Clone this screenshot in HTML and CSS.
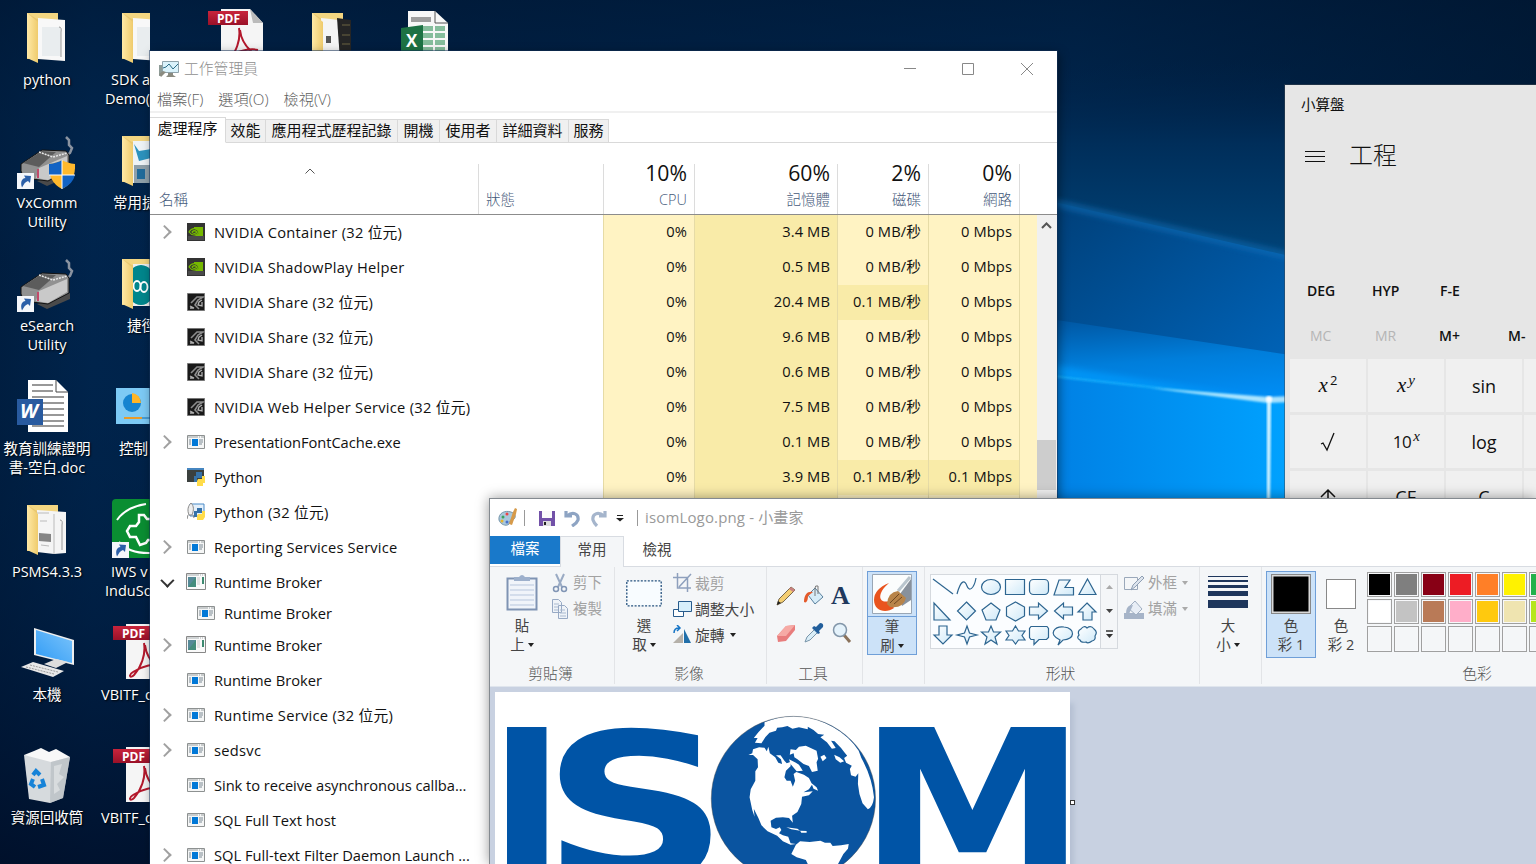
FILE: index.html
```html
<!DOCTYPE html>
<html lang="zh-Hant">
<head>
<meta charset="utf-8">
<title>Desktop</title>
<link rel="stylesheet" href="styles.css">
</head>
<body>
<svg width="0" height="0" class="defs">
<defs>
<linearGradient id="gFold" x1="0" x2="1"><stop offset="0" stop-color="#ffe9a6"/><stop offset="1" stop-color="#efcb6c"/></linearGradient>
<linearGradient id="gRed" x1="0" x2="0" y1="0" y2="1"><stop offset="0" stop-color="#c8243c"/><stop offset="1" stop-color="#9a1128"/></linearGradient>
<linearGradient id="gScr" x1="0" y1="1" x2="1" y2="0"><stop offset="0" stop-color="#2f9bf5"/><stop offset="1" stop-color="#7cc4fb"/></linearGradient>
<linearGradient id="gShape" x1="0" y1="0" x2="1" y2="1"><stop offset="0" stop-color="#fff"/><stop offset="1" stop-color="#cfe9f8"/></linearGradient>
<symbol id="folder" viewBox="0 0 48 54"><path d="M5 2h31v46H5z" fill="#e9c76f"/><path d="M5 2h31v6H15z" fill="#f3d681"/></symbol>
<symbol id="flap" viewBox="0 0 48 54"><path d="M5 2l11 9v41L5 47z" fill="url(#gFold)"/></symbol>
<symbol id="pdf" viewBox="0 0 56 56"><path d="M14 1h29l13 14v41H14z" fill="#f5f5f5"/><path d="M43 1l13 14H46z" fill="#bbb"/><path d="M32 20c2 12-3 24-10 32-4 4-6 0-1-3 9-6 22-9 30-7M33 22c1 10 6 17 13 23" fill="none" stroke="#b3182c" stroke-width="2"/><rect x="1" y="3" width="40" height="14" fill="url(#gRed)"/></symbol>
<symbol id="short" viewBox="0 0 17 17"><path d="M0 0h17v17H0z" fill="#f4f6fa"/><path d="M5 14.500c-2-6 0-9 3.500-9.500L7 2.500l7 .5-1 7-2-2c-3 1-4 3-6 6.500z" fill="#2b5fa8"/></symbol>
<symbol id="mouse" viewBox="0 0 60 54"><path d="M51 2l3 3v5l3 3-2 5-5 3" fill="none" stroke="#8a93a0" stroke-width="2.500"/><path d="M22 46l10 5 23-10v-6z" fill="#4a4a4a"/><path d="M6 29L27 15l24 1 3 4v15L33 46 9 43 6 36z" fill="#919191" stroke="#111"/><path d="M8 28l19-12 14 1-17 15z" fill="#5c5c5c"/><path d="M24 33L52 21v13L33 45l-12-2z" fill="#c9c9c9"/><path d="M24 17l14 5 14-4" fill="none" stroke="#e8e8e8" stroke-width="1.500" stroke-dasharray="2 1"/><path d="M23 34v9" stroke="#c2496a" stroke-width="2"/></symbol>
<symbol id="nvg" viewBox="0 0 18 18"><path d="M0 0h18v18H0z" fill="#333"/><path d="M1 13h16v4H1z" fill="#4a4a4a"/><path d="M7 4h9v9H7c3-1 5-3 5-4-2-3-4-3-5-3z" fill="#76b900"/><path d="M2 9c3-5 8-4 10 0-3 4-7 4-10 0zM5 9c2-2 4-1 5 0-2 2-4 2-5 0z" fill="none" stroke="#76b900" stroke-width="1.200"/></symbol>
<symbol id="nvs" viewBox="0 0 18 18"><path d="M.5.500h17v17H.5z" fill="#191919" stroke="#777"/><path d="M4 10l6-6h6l-5 3-3 5 4 4" fill="none" stroke="#8d8d8d" stroke-width="1.600"/><path d="M15 7l-3 2-1 3 4 1V9M3 13l4 2H3" fill="none" stroke="#b0b0b0" stroke-width="1.300"/></symbol>
<symbol id="app" viewBox="0 0 18 14"><path d="M.5.500h17v13H.5z" fill="#f5f6f6" stroke="#8d9191"/><path d="M1 2h16" stroke="#9ca2a4" stroke-dasharray="10 1 1 1"/><path d="M5 4h6v7H5z" fill="#0078d7"/><path d="M2 5h2M2 7h2M2 9h2M12 5h4M12 7h4M12 9h3" stroke="#7d8a94"/></symbol>
<symbol id="appg" viewBox="0 0 20 17"><path d="M.5.500h19v16H.5z" fill="#fafafa" stroke="#888"/><path d="M1 2h18" stroke="#a6aeb0" stroke-dasharray="12 1 1 1 1 1"/><path d="M2 4h8v10H2z" fill="#448c7c"/><path d="M2 4h8L2 14z" fill="#568a98"/><path d="M11 5h3M11 7h3M11 9h3M11 11h3" stroke="#ccc"/><path d="M16 4h2v7h-2z" fill="#3d8a70"/></symbol>
<symbol id="py" viewBox="0 0 18 18"><path d="M0 0h17v14H0z" fill="#3b403e"/><path d="M0 0h17v2H0z" fill="#4686c0"/><path d="M9 4h6v6h-5v4H7V8h2z" fill="#3672a8"/><path d="M11 11h4V8h3v7h-2v3h-6v-5z" fill="#ffdc4a"/></symbol>
<symbol id="py3" viewBox="0 0 18 18"><path d="M3 1h14v12H3z" fill="#e4f0fb" stroke="#4b8bc8"/><path d="M4 0c3 3 3 7 1 12H2C0 7 1 3 4 0zM1 12l-1 4M6 12l1 3" fill="#eee" stroke="#888"/><path d="M10 5h5v5h-5v4H7V8h3z" fill="#3672a8"/><path d="M11 11h4V8h3v6l-2 3h-6v-4z" fill="#ffdc4a"/></symbol>
</defs>
</svg>

<svg class="wallpaper" viewBox="0 0 1536 864" preserveAspectRatio="none">
<defs>
<linearGradient id="wBase" x1="0" x2="1"><stop offset="0" stop-color="#001a3a"/><stop offset=".06" stop-color="#002249"/><stop offset=".3" stop-color="#001c3e"/><stop offset=".7" stop-color="#00244b"/><stop offset="1" stop-color="#00142c"/></linearGradient>
<linearGradient id="wDown" x1="0" x2="0" y1="0" y2="1"><stop offset="0" stop-color="#001a38" stop-opacity=".6"/><stop offset=".3" stop-color="#00305e" stop-opacity=".15"/><stop offset="1" stop-color="#000d26" stop-opacity=".75"/></linearGradient>
<linearGradient id="wSky" x1="0" x2="0" y1="0" y2="1"><stop offset="0" stop-color="#002248" stop-opacity="0"/><stop offset=".4" stop-color="#002e5a"/><stop offset="1" stop-color="#00467c"/></linearGradient>
<linearGradient id="wMid" x1="0" x2="1" y1="0" y2="1"><stop offset="0" stop-color="#003f78"/><stop offset="1" stop-color="#0065bb"/></linearGradient>
<linearGradient id="wLow" x1="0" x2=".2" y1="0" y2="1"><stop offset="0" stop-color="#0055a0"/><stop offset=".5" stop-color="#007edb"/><stop offset="1" stop-color="#008ff8"/></linearGradient>
<linearGradient id="wWin" x1="0" x2="1"><stop offset="0" stop-color="#0080e4"/><stop offset="1" stop-color="#00a2ff"/></linearGradient>
<filter id="b1"><feGaussianBlur stdDeviation="1"/></filter><filter id="b4"><feGaussianBlur stdDeviation="3"/></filter>
</defs>
<path d="M0 0h1536v864H0z" fill="url(#wBase)"/><path d="M0 0h1536v864H0z" fill="url(#wDown)"/>
<path d="M1050 60h240v210h-240z" fill="url(#wSky)"/>
<path d="M1050 201L1290 256v120h-240z" fill="url(#wMid)"/>
<path d="M1050 202L1290 256" stroke="#1678c5" stroke-width="6" opacity=".6" filter="url(#b4)"/>
<path d="M1050 319L1290 355v60h-240z" fill="url(#wLow)"/>
<path d="M1050 365L1268 399l-218-21z" fill="#009cff" opacity=".7" filter="url(#b4)"/>
<path d="M1050 376L1268 401h22v100h-240z" fill="url(#wWin)"/>
<path d="M1050 376L1268 400" stroke="#1cb7ff" stroke-width="2" opacity=".8" filter="url(#b1)"/>
<path d="M1150 388l120 9 20-1v6l-22 1z" fill="#c7f0ff" opacity=".85" filter="url(#b1)"/>
<path d="M1267 399h4l-1 100h-3z" fill="#d9f5ff" filter="url(#b1)"/>
<circle cx="1269" cy="399" r="3" fill="#fff" filter="url(#b1)"/>
</svg>

<main class="desktop">
<section class="col first">
 <div class="item"><svg class="ic" viewBox="0 0 94 66"><use href="#folder" x="22" y="11" width="48" height="54"/><path d="M38 18l27 2v41l-27-2z" fill="#f8f8f8"/><path d="M42 27h19v29H42z" fill="#e9edef"/><path d="M59 27q3 0 2 5v25" fill="none" stroke="#999"/><use href="#flap" x="22" y="11" width="48" height="54"/></svg><p>python</p></div>
 <div class="item"><svg class="ic" viewBox="0 0 94 66"><use href="#mouse" x="15" y="12" width="60" height="54"/><path d="M49 41q8-1 13-4 5 3 13 4 1 18-13 25-14-7-13-25z" fill="#ffb92d"/><path d="M49 41q8-1 13-4v15H49zM62 52h13q-2 9-13 14z" fill="#1263c4"/><path d="M62 37v29M49 52h26" stroke="#fff" stroke-width="1"/><use href="#short" x="17" y="50" width="17" height="17"/></svg><p>VxComm<br>Utility</p></div>
 <div class="item"><svg class="ic" viewBox="0 0 94 66"><use href="#mouse" x="15" y="12" width="60" height="54"/><use href="#short" x="17" y="50" width="17" height="17"/></svg><p>eSearch<br>Utility</p></div>
 <div class="item"><svg class="ic" viewBox="0 0 94 66"><path d="M28 11h28l12 12v40H28z" fill="#fff"/><path d="M56 11v12h12" fill="none" stroke="#444"/><path d="M32 16h21M32 22h21M32 28h32M43 34h21M43 40h21M43 46h21M43 52h21M32 57h32" stroke="#777" stroke-width="1.500"/><path d="M17 30h26v26H17z" fill="#285a9f"/><text x="20" y="49" class="word-text">W</text></svg><p>教育訓練證明<br>書-空白.doc</p></div>
 <div class="item"><svg class="ic" viewBox="0 0 94 66"><use href="#folder" x="22" y="11" width="48" height="54"/><path d="M37 18l29 2v41l-12 1-17-2z" fill="#f5f5f5"/><path d="M54 22v40M37 21h12M40 29h7M41 53l8 1" stroke="#bbb"/><path d="M39 41l12 1v8l-12-1z" fill="#555" opacity=".7"/><path d="M60 28q3 0 2 5v25" fill="none" stroke="#999"/><use href="#flap" x="22" y="11" width="48" height="54"/></svg><p>PSMS4.3.3</p></div>
 <div class="item"><svg class="ic" viewBox="0 0 94 66"><path d="M34 13l40 12v25L34 40z" fill="#eee"/><path d="M36 15l36 11v22l-36-9z" fill="url(#gScr)"/><path d="M44 49l12-5 12 3-12 6z" fill="#ddd"/><path d="M21 52l12-5 31 9-11 6z" fill="#e8e8e8"/><path d="M26 52l28 7M30 50l28 7" stroke="#999" stroke-dasharray="2 1"/></svg><p>本機</p></div>
 <div class="item"><svg class="ic" viewBox="0 0 94 66"><path d="M24 17l46 2-7 41-13 5-21-4z" fill="#e2e5e7" opacity=".95"/><path d="M24 17l10-4 7-3 8 4 7-3 14 8-19 5z" fill="#f8f8f8"/><path d="M51 24l-1 41 13-5 7-41z" fill="#b7bec2" opacity=".7"/><path d="M54 28l8-2-3 10 5 3-7 7 3 6-6 4" fill="#d8dcde"/><path d="M33 37l3-4 4 4M42 41l2 6-6 2M35 49l-4-3 2-5" fill="none" stroke="#1683d8" stroke-width="4"/></svg><p>資源回收筒</p></div>
</section>
<section class="col second">
 <div class="item"><svg class="ic" viewBox="0 0 94 66"><use href="#folder" x="23" y="11" width="48" height="54"/><path d="M39 18l27 2v41l-27-2z" fill="#f8f8f8"/><path d="M43 27h19v29H43z" fill="#e9edef"/><path d="M60 27q3 0 2 5v25" fill="none" stroke="#999"/><use href="#flap" x="23" y="11" width="48" height="54"/></svg><p class="s1">SDK a<br>Demo(</p></div>
 <div class="item"><svg class="ic" viewBox="0 0 94 66"><use href="#folder" x="23" y="11" width="48" height="54"/><path d="M39 18h27v42H39z" fill="#eef3f6"/><path d="M40 21l5 7 12-2v9l-12 3z" fill="#2c92bd"/><path d="M40 42h16v18H40z" fill="#8fa0aa"/><path d="M43 46h8v10h-8z" fill="#206b9b"/><use href="#flap" x="23" y="11" width="48" height="54"/></svg><p class="s2">常用捷</p></div>
 <div class="item"><svg class="ic" viewBox="0 0 94 66"><use href="#folder" x="23" y="11" width="48" height="54"/><path d="M39 18h27v42H39z" fill="#eee"/><ellipse cx="47" cy="39" rx="15" ry="20" fill="#00868c"/><ellipse cx="43" cy="40" rx="3.500" ry="5" fill="none" stroke="#fff" stroke-width="1.800"/><ellipse cx="50" cy="41" rx="3.500" ry="5" fill="none" stroke="#fff" stroke-width="1.800"/><use href="#flap" x="23" y="11" width="48" height="54"/></svg><p class="s3">捷徑</p></div>
 <div class="item"><svg class="ic" viewBox="0 0 94 66"><path d="M22 19h50v36H22z" fill="#7dcaf5"/><circle cx="38" cy="34" r="9" fill="#1684d0"/><path d="M38 34V24a10 10 0 0 1 9 10z" fill="#ffb526"/><path d="M30 49h18" stroke="#e89b2a" stroke-width="2"/><path d="M48 49h20" stroke="#176fae"/></svg><p class="s4">控制</p></div>
 <div class="item"><svg class="ic" viewBox="0 0 94 66"><rect x="18" y="7" width="62" height="60" rx="4" fill="#0a8e32"/><path d="M23 28q9-13 29-16M25 50q10 12 33 11" fill="none" stroke="#fff" stroke-width="2"/><path d="M60 27h-7l-3-4h-5v7l-3 4h-6l-3 5 3 6h6l4 8 6-2 2-3h6" fill="none" stroke="#fff" stroke-width="2.500"/><use href="#short" x="18" y="50" width="17" height="17"/></svg><p class="s1">IWS v<br>InduSo</p></div>
 <div class="item"><svg class="ic" viewBox="0 0 94 66"><use href="#pdf" x="18" y="8" width="56" height="56"/><text x="28" y="22.500" class="pdf-text">PDF</text></svg><p class="s5">VBITF_d</p></div>
 <div class="item"><svg class="ic" viewBox="0 0 94 66"><use href="#pdf" x="18" y="8" width="56" height="56"/><text x="28" y="22.500" class="pdf-text">PDF</text></svg><p class="s5">VBITF_d</p></div>
</section>
<section class="top-icons">
 <svg viewBox="0 0 94 51"><use href="#pdf" x="17" y="8" width="56" height="56"/><text x="27" y="22.500" class="pdf-text">PDF</text></svg>
 <svg viewBox="0 0 94 51"><use href="#folder" x="23" y="11" width="48" height="54"/><path d="M37 18l19 2v40H37z" fill="#f5f5f5"/><path d="M53 18l14 2v40H56z" fill="#252525"/><path d="M58 25h8M58 35h8M58 44h8" stroke="#6d6542"/><path d="M42 36h5v7h-5z" fill="#555"/><use href="#flap" x="23" y="11" width="48" height="54"/></svg>
 <svg viewBox="0 0 94 51"><path d="M30 11h27l13 12v40H30z" fill="#f7f7f7"/><path d="M57 11v12h13" fill="none" stroke="#555"/><path d="M33 17h20v5H33z" fill="#777" opacity=".7"/><path d="M45 26h10v5H45zM57 26h10v5H57zM45 33h10v5H45zM57 33h10v5H57zM45 40h10v5H45zM57 40h10v5H57zM45 47h10v5H45zM57 47h10v5H57z" fill="#85bd9c"/><path d="M23 28l22-3v30l-22-3z" fill="#1d7244"/><text x="28" y="47" class="xl-text">X</text></svg>
</section>
</main>

<section class="tm">
 <header class="tm-title"><svg width="20" height="18" viewBox="0 0 20 18"><path d="M0 5h3v11H0z" fill="#8e9c98"/><path d="M3.500 1.500h16v11h-16z" fill="#d9f2fb" stroke="#8ea3ac"/><path d="M4 8l3-1 3-3 4 5 5-5" fill="none" stroke="#2b6d87"/><path d="M0 14l4-3 3 1-5 5zM9 13h5v2l3 2H7l2-2z" fill="#8b8b80"/></svg><span>工作管理員</span>
  <div class="ctl"><svg width="18" height="18" viewBox="0 0 18 18"><path d="M4 8.500h12"/></svg><svg width="18" height="18" viewBox="0 0 18 18"><path d="M3.500 3.500h11v11h-11z"/></svg><svg width="18" height="18" viewBox="0 0 18 18"><path d="M3 3l12 12M15 3L3 15"/></svg></div></header>
 <nav class="tm-menu"><span>檔案(F)</span><span>選項(O)</span><span>檢視(V)</span></nav>
 <nav class="tm-tabs"><b class="on t1">處理程序</b><b class="t2">效能</b><b class="t3">應用程式歷程記錄</b><b class="t4">開機</b><b class="t5">使用者</b><b class="t6">詳細資料</b><b class="t7">服務</b></nav>
 <div class="tm-head">
  <div class="h-name"><svg width="10" height="6" viewBox="0 0 10 6"><path d="M.5 5.500L5 1l4.500 4.500" fill="none" stroke="#555"/></svg><span>名稱</span></div><div class="h-st"><span>狀態</span></div>
  <div><em>10%</em><span>CPU</span></div><div><em>60%</em><span>記憶體</span></div><div><em>2%</em><span>磁碟</span></div><div><em>0%</em><span>網路</span></div><div class="end"></div>
 </div>
 <div class="tm-body"><div class="rows">
  <div class="row"><div class="nm"><i class="ch"></i><svg class="p18"><use href="#nvg"/></svg><span class="wd">NVIDIA Container (32 位元)</span></div><u>0%</u><u class="m">3.4 MB</u><u>0 MB/秒</u><u>0 Mbps</u><u></u></div>
  <div class="row"><div class="nm"><i></i><svg class="p18"><use href="#nvg"/></svg><span class="wd">NVIDIA ShadowPlay Helper</span></div><u>0%</u><u class="m">0.5 MB</u><u>0 MB/秒</u><u>0 Mbps</u><u></u></div>
  <div class="row"><div class="nm"><i></i><svg class="p18"><use href="#nvs"/></svg><span class="wd">NVIDIA Share (32 位元)</span></div><u>0%</u><u class="m">20.4 MB</u><u class="m">0.1 MB/秒</u><u>0 Mbps</u><u></u></div>
  <div class="row"><div class="nm"><i></i><svg class="p18"><use href="#nvs"/></svg><span class="wd">NVIDIA Share (32 位元)</span></div><u>0%</u><u class="m">9.6 MB</u><u>0 MB/秒</u><u>0 Mbps</u><u></u></div>
  <div class="row"><div class="nm"><i></i><svg class="p18"><use href="#nvs"/></svg><span class="wd">NVIDIA Share (32 位元)</span></div><u>0%</u><u class="m">0.6 MB</u><u>0 MB/秒</u><u>0 Mbps</u><u></u></div>
  <div class="row"><div class="nm"><i></i><svg class="p18"><use href="#nvs"/></svg><span class="wd">NVIDIA Web Helper Service (32 位元)</span></div><u>0%</u><u class="m">7.5 MB</u><u>0 MB/秒</u><u>0 Mbps</u><u></u></div>
  <div class="row"><div class="nm"><i class="ch"></i><svg class="p14"><use href="#app"/></svg><span class="nr">PresentationFontCache.exe</span></div><u>0%</u><u class="m">0.1 MB</u><u>0 MB/秒</u><u>0 Mbps</u><u></u></div>
  <div class="row"><div class="nm"><i></i><svg class="p18"><use href="#py"/></svg><span>Python</span></div><u>0%</u><u class="m">3.9 MB</u><u class="m">0.1 MB/秒</u><u class="m">0.1 Mbps</u><u></u></div>
  <div class="row"><div class="nm"><i></i><svg class="p18"><use href="#py3"/></svg><span class="wd">Python (32 位元)</span></div><u></u><u class="m"></u><u></u><u></u><u></u></div>
  <div class="row"><div class="nm"><i class="ch"></i><svg class="p14"><use href="#app"/></svg><span class="md">Reporting Services Service</span></div></div>
  <div class="row"><div class="nm"><i class="ch open"></i><svg class="p17"><use href="#appg"/></svg><span>Runtime Broker</span></div></div>
  <div class="row child"><div class="nm"><i></i><svg class="p14"><use href="#app"/></svg><span>Runtime Broker</span></div></div>
  <div class="row"><div class="nm"><i class="ch"></i><svg class="p17"><use href="#appg"/></svg><span>Runtime Broker</span></div></div>
  <div class="row"><div class="nm"><i></i><svg class="p14"><use href="#app"/></svg><span>Runtime Broker</span></div></div>
  <div class="row"><div class="nm"><i class="ch"></i><svg class="p14"><use href="#app"/></svg><span class="wd">Runtime Service (32 位元)</span></div></div>
  <div class="row"><div class="nm"><i class="ch"></i><svg class="p14"><use href="#app"/></svg><span class="wd">sedsvc</span></div></div>
  <div class="row"><div class="nm"><i></i><svg class="p14"><use href="#app"/></svg><span class="nr">Sink to receive asynchronous callba...</span></div></div>
  <div class="row"><div class="nm"><i></i><svg class="p14"><use href="#app"/></svg><span>SQL Full Text host</span></div></div>
  <div class="row"><div class="nm"><i class="ch"></i><svg class="p14"><use href="#app"/></svg><span>SQL Full-text Filter Daemon Launch ...</span></div></div>
 </div><div class="scroll"><svg width="20" height="20" viewBox="0 0 20 20"><path d="M5 13l4.500-4.500L14 13" fill="none" stroke="#555" stroke-width="2"/></svg><div class="thumb"></div></div></div>
</section>

<section class="calc">
 <div class="c-title">小算盤</div>
 <div class="c-mode"><svg width="20" height="14" viewBox="0 0 20 14"><path d="M0 1.500h20M0 6.500h20M0 11.500h20" stroke="#111"/></svg><span>工程</span></div>
 <div class="c-row a"><span>DEG</span><span>HYP</span><span>F-E</span></div>
 <div class="c-row b"><span class="off">MC</span><span class="off">MR</span><span>M+</span><span>M-</span></div>
 <div class="c-grid"><div><span><i>x</i><sup>2</sup></span></div><div><span><i>x</i><sup><i>y</i></sup></span></div><div>sin</div><div></div>
 <div><svg width="16" height="20" viewBox="0 0 16 20"><path d="M1 12l2-1 4 7L14 1" fill="none" stroke="#111" stroke-width="1.300"/></svg></div><div><span class="ten">10<sup><i>x</i></sup></span></div><div>log</div><div></div>
 <div class="r3"><svg width="16" height="18" viewBox="0 0 16 18"><path d="M8 18V2M1 9l7-7 7 7" fill="none" stroke="#111" stroke-width="1.500"/></svg></div><div class="r3">CE</div><div class="r3">C</div><div></div></div>
</section>

<section class="paint">
 <header class="p-title">
  <svg width="20" height="20" viewBox="0 0 20 20"><path d="M1 12C0 5 7 2 13 4c6 2 5 7 1 8-3 0-2 2-3 4-3 3-9 0-10-4z" fill="#a9c8dc" stroke="#7595aa"/><circle cx="5" cy="9" r="1.500" fill="#3aa35a"/><circle cx="9" cy="6" r="1.500" fill="#e44"/><circle cx="4" cy="13" r="1.500" fill="#e7b42c"/><circle cx="9" cy="14" r="1.500" fill="#4772cc"/><path d="M11 16l4-12 2-4 2 1-1 5-4 11z" fill="#d69a4a"/></svg>
  <s></s>
  <svg class="sv" width="16" height="16" viewBox="0 0 16 16"><path d="M0 1h16v15H0z" fill="#7251a8"/><path d="M3 1h10v7H3z" fill="#fafafa"/><path d="M4 11h8v5H4z" fill="#ddd"/><path d="M5 12h2v3H5z" fill="#222"/></svg>
  <svg class="un" width="17" height="18" viewBox="0 0 17 18"><path d="M2 2v5h6M3 7c6-5 12-2 11 4-1 3-3 4-6 6" fill="none" stroke="#8ea4c3" stroke-width="3.200"/></svg>
  <svg class="re" width="17" height="18" viewBox="0 0 17 18"><path d="M15 2v5H9M14 7C8 2 2 5 3 11c1 3 2 4 4 6" fill="none" stroke="#a5b5cc" stroke-width="3.200"/></svg>
  <svg class="dd" width="8" height="8" viewBox="0 0 8 8"><path d="M1 1.500h6" stroke="#222"/><path d="M0 4h8L4 7.500z" fill="#222"/></svg>
  <s class="s2nd"></s><span>isomLogo.png - 小畫家</span>
 </header>
 <nav class="p-tabs"><b class="file">檔案</b><b class="home">常用</b><b class="view">檢視</b></nav>
 <div class="ribbon">
  <div class="grp g1"><div class="body">
   <div class="big"><svg width="32" height="38" viewBox="0 0 32 38"><path d="M1.500 4.500h29v31h-29z" fill="#f0f4fa" stroke="#7f93b3" stroke-width="2"/><path d="M4 11h24M4 16h24M4 21h24M4 26h24M4 31h24" stroke="#b7c6dd"/><path d="M8 3h5q3-4 6 0h5v4H8z" fill="#9db0cc"/></svg><p>貼<br>上<small></small></p></div>
   <ul><li class="off"><svg width="16" height="20" viewBox="0 0 16 20"><path d="M4 1l6 13M12 1L6 14" stroke="#9aabc4" stroke-width="2"/><circle cx="4" cy="16" r="2.500" fill="none" stroke="#8195b5" stroke-width="1.500"/><circle cx="12" cy="16" r="2.500" fill="none" stroke="#8195b5" stroke-width="1.500"/></svg>剪下</li><li class="off"><svg width="16" height="20" viewBox="0 0 16 20"><path d="M.5.500h6l3 3v10h-9zM6.500 6.500h6l3 3v10h-9z" fill="#eff3f8" stroke="#97a9c4"/><path d="M2 5h5M2 8h4M2 11h4M8 11h5M8 14h6M8 17h6" stroke="#a9b9cf"/></svg>複製</li></ul></div><h6>剪貼簿</h6></div>
  <div class="grp g2"><div class="body">
   <div class="big"><svg width="36" height="38" viewBox="0 0 36 38"><path d="M.8 6.800h34.400v25H.8z" fill="#f8fcff" stroke="#24517e" stroke-width="1.300" stroke-dasharray="2 1.500"/></svg><p>選<br>取<small></small></p></div>
   <ul><li class="off"><svg width="19" height="20" viewBox="0 0 19 20"><path d="M4.500 0v15H18M0 4.500h14.500V19M6 14L18 1" fill="none" stroke="#8ea0bd" stroke-width="1.500"/></svg>裁剪</li><li><svg width="19" height="20" viewBox="0 0 19 20"><path d="M.5 10.500h10v7H.5z" fill="#fff" stroke="#285b8c"/><path d="M5.500 2.500h13v10h-13z" fill="#d7effb" stroke="#285b8c"/></svg>調整大小</li><li><svg width="19" height="20" viewBox="0 0 19 20"><path d="M0 18L10 8v10z" fill="#b5b1aa"/><path d="M11 4v14h7z" fill="#216fa9"/><path d="M1 8q0-5 5-5M4 0l3 3-3 3" fill="none" stroke="#1675c6" stroke-width="1.500"/></svg>旋轉<small></small></li></ul></div><h6>影像</h6></div>
  <div class="grp g3"><div class="body tools">
   <svg viewBox="0 0 22 22"><path d="M2 20l2-6L16 2l4 3L8 17z" fill="#f4ce72" stroke="#77684c"/><path d="M2 20l1-4 3 2z" fill="#222"/><path d="M16 2l4 3-2 2-4-3z" fill="#c98181"/></svg>
   <svg viewBox="0 0 22 22"><path d="M5 10l7-7 8 9-8 7z" fill="#d6ecf8" stroke="#587f9c"/><path d="M12 11V3q0-3 3-2v8" fill="none" stroke="#777"/><path d="M10 7C5 6 1 9 1 17c3 2 4-3 4-6z" fill="#e45a2b"/></svg>
   <strong>A</strong>
   <svg viewBox="0 0 22 22"><path d="M2 14l9-10 9-1v5l-9 11-8 1z" fill="#e87d7d"/><path d="M2 14l9-10 9-1-9 11z" fill="#f6aaa5"/></svg>
   <svg viewBox="0 0 22 22"><path d="M2 20l2-5 8-8 3 3-8 8z" fill="#d9edf7" stroke="#7895aa"/><path d="M11 4l2 1 4-4q4 0 3 4l-4 4 1 2-2 1-6-6z" fill="#225f9c"/></svg>
   <svg viewBox="0 0 22 22"><path d="M13 13l6 7" stroke="#8a725b" stroke-width="3"/><circle cx="9" cy="8" r="6.500" fill="#e4f2fb" stroke="#8296a9" stroke-width="1.500"/></svg>
   </div><h6>工具</h6></div>
  <div class="grp g4"><div class="brush"><div><svg width="40" height="40" viewBox="0 0 40 40"><path d="M.5.500h39v39H.5z" fill="#fbfdfd" stroke="#9aa7b5"/><path d="M28 20L39 5v21l-9 6z" fill="#6b7683" opacity=".8"/><path d="M26 17L38 3" stroke="#b9c5cd" stroke-width="3"/><path d="M17 9Q2 15 2 26c0 11 12 14 20 8l-5-7c-9 3-14-6 0-18z" fill="#e9541e"/><path d="M15 30q1-12 11-13l8 7q-3 11-16 9z" fill="#b88449"/><path d="M18 29l9-9M22 30l8-7" stroke="#704821"/></svg></div><p>筆<br>刷<small></small></p></div></div>
  <div class="grp g5"><div class="body"><div class="gallery"><svg width="170" height="74" viewBox="0 0 170 74"><g fill="url(#gShape)" stroke="#2d6590" stroke-width="1.200">
   <path d="M2 4l20 15"/><path d="M26 19c4-15 8-14 10-8s7 3 9-8" fill="none"/><ellipse cx="60" cy="12" rx="9.500" ry="7.500"/><path d="M74.500 4.500h19v15h-19z"/><rect x="98.500" y="4.500" width="19" height="15" rx="4"/><path d="M123 20l5-15h11l-5 7.500h8.500V20z"/><path d="M156.500 4l8.500 15.500h-17z"/>
   <path d="M3 28v17h16z"/><path d="M35.500 27l9 9-9 9-9-9z"/><path d="M60 28l9 7-4 10H55l-4-10z"/><path d="M84.500 27l9 5v9l-9 5-9-5v-9z"/><path d="M98.500 32h9v-4l9 8-9 8v-4h-9z"/><path d="M141.500 32h-9v-4l-9 8 9 8v-4h9z"/><path d="M156 28l9 9h-4v8h-9v-8h-5z"/>
   <path d="M8 51h8v9h5l-9 9-9-9h5z"/><path d="M36 51l2.500 7 7.500 2-7.500 2L36 69l-2.500-7-7.500-2 7.500-2z"/><path d="M60 51l2.500 6h7l-5.500 5 2 7-6-4-6 4 2-7-5.500-5h7z"/><path d="M84.500 51l3 5h6.500l-3 4.500 3 4.500h-6.500l-3 4-3-4H75l3-4.500-3-4.500h6.500z"/><path d="M100 51.500h16l1.500 2v9l-2 2H108l-5 5v-5h-3l-1.500-2v-9z"/><path d="M129 65c-13-6-5-14 4-13 12 1 11 13-1 13l-5 5z"/><path d="M150 54q3-4 6-1 4-3 7 1 4 3 1 7 1 4-3 5-4 3-6 1-5 1-6-2-4-2-1-5-2-4 2-6z"/></g></svg></div>
   <div class="gscroll"><svg width="17" height="74" viewBox="0 0 17 74"><path d="M5 14h7l-3.500-4z" fill="#aaa"/><path d="M5 34h7l-3.500 4z" fill="#444"/><path d="M5 56h7" stroke="#333" stroke-width="1.500"/><path d="M5 59h7l-3.500 4z" fill="#333"/></svg></div>
   <ul><li class="off"><svg width="20" height="20" viewBox="0 0 20 20"><path d="M.5 4.500h13v12H.5z" fill="none" stroke="#9aa8ba"/><path d="M7 17l2-5 9-9 2 2-9 9z" fill="#dde4ed" stroke="#8f9fb4"/></svg>外框<small></small></li><li class="off"><svg width="20" height="20" viewBox="0 0 20 20"><path d="M0 14h20v6H0z" fill="#a6b4c8"/><path d="M4 9l7-7 7 8-6 6z" fill="#e8eef6" stroke="#a0afc2"/><path d="M9 6C4 6 2 9 2 15h3z" fill="#a6b4c8"/></svg>填滿<small></small></li></ul></div><h6>形狀</h6></div>
  <div class="grp g6"><div class="body"><div class="big"><svg width="40" height="38" viewBox="0 0 40 38"><path d="M0 2h40v1H0zM0 6h40v2H0zM0 11h40v3H0zM0 17h40v5H0zM0 26h40v8H0z" fill="#1e365c"/></svg><p>大<br>小<small></small></p></div></div></div>
  <div class="grp g7"><div class="body"><div class="cbtn on"><div class="sw k"></div><p>色<br>彩 1</p></div><div class="cbtn"><div class="sw w"></div><p>色<br>彩 2</p></div>
   <div class="pal"><i class="c1"></i><i class="c2"></i><i class="c3"></i><i class="c4"></i><i class="c5"></i><i class="c6"></i><i class="c7"></i><i class="c8"></i><i class="c9"></i><i class="c10"></i><i class="c11"></i><i class="c12"></i><i class="c13"></i><i class="c14"></i><i></i><i></i><i></i><i></i><i></i><i></i><i></i></div></div><h6>色彩</h6></div>
 </div>
 <div class="work"><div class="sheet"><svg class="logo" width="575" height="172" viewBox="18 24 1502 516" preserveAspectRatio="none">
  <g class="logo-text"><text transform="translate(-1 595) scale(5.480 6.340)">I</text><text transform="translate(138 590) scale(6.850 6.180)">S</text><text transform="translate(966 595) scale(6.010 6.340)">M</text></g>
  <ellipse cx="797.500" cy="344" rx="214.500" ry="247" fill="#0a54a0"/>
  <g fill="#fff">
   <path d="M722 115Q800 78 880 117 925 140 955 180L968 200 975 222Q1003 280 1008 340 1005 370 992 376L978 358 970 330 966 300 967 268 960 278 948 274 945 255 950 245 935 236 930 222 938 215 930 204 922 192 905 172 896 170 908 192 898 194 885 175 868 160 878 152 862 150 850 138 835 128 835 136 812 130 795 134 782 126 768 130 755 131 752 140 735 146 724 160 714 178 697 176 704 162 694 162 706 145 722 125z"/>
   <path d="M680 213L690 208 692 196 708 190 722 191 728 202 732 188 736 208 750 220 758 236 768 240 765 226 752 214 764 214 774 230 780 238 791 233 790 247 778 260 774 280 780 290 790 290 796 308 802 290 798 270 805 264 825 272 838 282 845 298 858 310 862 320 850 314 846 302 838 316 824 325 848 322 838 334 820 338 818 360 808 384 794 395 796 416 786 402 770 400 752 401 738 410 740 430 752 435 762 430 766 438 760 448 770 454 784 458 790 478 804 480 790 482 770 472 755 455 730 442 714 424 706 402 694 374 696 398 690 378 683 340 686 316 698 290 698 262 705 250 704 226 692 213z"/>
   <path d="M788 212L790 196 804 198 812 188 830 185 858 200 862 224 858 235 861 260 846 264 838 246 824 240 808 226 800 220 798 208zM786 226L804 236 812 242 822 260 806 262 790 240zM868 218L878 212 884 222 874 232zM904 212L918 220 930 232 920 236 908 226zM779 430L808 434 815 440 792 436zM815 440L832 441 832 446 818 446z"/>
   <path d="M804 482L815 472 840 474 868 470 880 476 894 476 900 486 922 484 942 480 940 494 928 510 914 540H835L830 528 806 520 792 510z"/>
  </g><ellipse cx="797.500" cy="344" rx="214.500" ry="247" fill="none" stroke="#444" stroke-width="1.200"/></svg></div><div class="handle"></div></div>
</section>
</body>
</html>
```
FILE: styles.css
```css
* { box-sizing: border-box; }
body { margin: 0; width: 1536px; height: 864px; overflow: hidden; position: relative; background: #001a3a; font-family: "Open Sans", "Noto Sans", "Noto Sans CJK TC", sans-serif; font-size: 14.5px; color: #111; }
p, ul, h6 { margin: 0; padding: 0; list-style: none; font-weight: 400; }
i, em, u, s { font-style: normal; text-decoration: none; }
svg { display: block; flex: none; }
.defs, .wallpaper { position: absolute; left: 0; top: 0; }
.wallpaper { width: 1536px; height: 864px; }
.pdf-text { font: bold 12px "Open Sans", sans-serif; fill: #fff; }
.word-text { font: italic bold 20px "Open Sans", sans-serif; fill: #fff; }
.xl-text { font: bold 17px "Open Sans", sans-serif; fill: #fff; }

/* desktop */
.desktop { position: absolute; left: 0; top: 0; display: flex; }
.col { width: 94px; height: 864px; overflow: hidden; }
.col.second { width: 56px; }
.item { height: 123px; }
.ic { width: 94px; height: 66px; }
.item p { margin-top: 4px; line-height: 19px; text-align: center; color: #fff; text-shadow: 1px 1px 2px #000; white-space: nowrap; }
.second .item p { text-align: left; }
.second .s1 { padding-left: 11px; text-indent: 6px; }
.second .s2 { padding-left: 19px; }
.second .s3 { padding-left: 33px; }
.second .s4 { padding-left: 25px; }
.second .s5 { padding-left: 7px; }
.top-icons { display: flex; margin-left: 40px; height: 51px; }
.top-icons svg { width: 94px; height: 51px; }

/* task manager */
.tm { position: absolute; left: 150px; top: 51px; width: 907px; height: 813px; background: #fff; box-shadow: 0 0 0 1px rgba(20,50,90,.5), 2px 3px 10px rgba(0,0,0,.45); overflow: hidden; }
.tm-title { height: 36px; display: flex; align-items: center; padding-left: 9px; color: #8f8f8f; font-weight: 300; }
.tm-title > span { margin: 0 0 4px 5px; font-size: 14.800px; }
.ctl { margin-left: auto; display: flex; gap: 41px; padding-right: 21px; }
.ctl svg { fill: none; stroke: #888; }
.tm-menu { height: 26px; display: flex; align-items: center; gap: 15px; padding: 0 0 2px 7px; color: #5f5f5f; border-bottom: 2px solid #f0f0f0; font-weight: 300; font-size: 15.200px; }
.tm-tabs { height: 30px; display: flex; align-items: flex-end; border-bottom: 1px solid #d9d9d9; }
.tm-tabs b { height: 24px; line-height: 20px; margin-bottom: -1px; text-align: center; font-weight: 400; background: #f0f0f0; border: 1px solid #d9d9d9; border-left: 0; font-size: 15px; white-space: nowrap; }
.tm-tabs .on { height: 26px; background: #fff; border-bottom-color: #fff; line-height: 20px; }
.t1 { width: 76px; } .t2 { width: 40px; } .t3 { width: 132px; } .t4 { width: 42px; } .t5 { width: 57px; } .t6 { width: 72px; } .t7 { width: 40px; }
.tm-head { height: 72px; padding-top: 21px; display: grid; grid-template-columns: 328px 125px 91px 143px 91px 91px 38px; border-bottom: 1px solid #8c8c8c; }
.tm-head > div { border-left: 1px solid #dcdcdc; padding: 0 7px; display: flex; flex-direction: column; align-items: flex-end; }
.tm-head > .h-name { border-left: 0; align-items: flex-start; padding: 4px 0 0 9px; }
.h-name svg { margin-left: 146px; }
.h-name span { margin-top: 16px; }
.tm-head > .h-st { align-items: flex-start; padding-top: 26px; }
.tm-head em { font-size: 21.200px; line-height: 18px; }
.tm-head span { line-height: 20px; color: #45597a; font-weight: 300; }
.tm-head em + span { margin-top: 8px; }
.tm-body { display: flex; }
.rows { width: 887px; }
.row { height: 35px; display: grid; grid-template-columns: 453px 91px 143px 91px 91px 18px; font-size: 14.700px; }
.nm { display: flex; align-items: center; white-space: nowrap; padding-bottom: 2px; }
.nm .wd { letter-spacing: .27px; }
.nm .md { letter-spacing: .17px; }
.nm .nr { letter-spacing: -.05px; }
.nm i { width: 37px; }
.nm i.ch { padding-left: 11px; display: flex; align-items: center; }
.nm i.ch::before { content: ""; width: 8px; height: 8px; border: solid #a0a0a0; border-width: 2px 2px 0 0; transform: rotate(45deg) translate(-1px, 1px); }
.nm i.open::before { transform: rotate(135deg) translate(-2px, 0); border-color: #333; }
.nm svg { width: 18px; height: 18px; margin-right: 9px; }
.nm svg.p14 { height: 14px; }
.nm svg.p17 { width: 20px; height: 17px; margin: 0 8px 0 -1px; }
.row.child { height: 28px; }
.row.child .nm i { width: 47px; }
.row u { background: #fff3c3; border-left: 1px solid #e6dba6; text-align: right; line-height: 32px; padding-right: 7px; white-space: nowrap; letter-spacing: .1px; }
.row u.m { background: #f9eba8; }
.scroll { width: 20px; height: 650px; background: #f0f0f0; }
.thumb { height: 50px; margin: 205px 1px 0 0; background: #cdcdcd; }

/* calculator */
.calc { position: absolute; left: 1285px; top: 85px; width: 251px; height: 414px; background: #e6e6e6; overflow: hidden; box-shadow: 0 0 0 1px rgba(60,70,80,.5); }
.c-title { padding: 10px 0 0 16px; height: 50px; line-height: 20px; }
.c-mode { display: flex; align-items: center; height: 44px; padding-left: 20px; font-size: 24px; font-weight: 300; }
.c-mode span { margin: 0 0 7px 24px; }
.c-row { display: flex; font-weight: 600; font-size: 14px; line-height: 20px; color: #111; }
.c-row span { flex: none; }
.c-row.a { margin-top: 102px; padding-left: 22px; }
.c-row.a span { width: 65px; }
.c-row.a span + span { width: 68px; }
.c-row.b { margin-top: 25px; padding-left: 25px; }
.c-row.b span { width: 65px; }
.c-row.b span + span { width: 64px; }
.c-row.b span + span + span { width: 69px; }
.off { color: #b5b5b5; }
.c-row .off { font-weight: 400; }
.c-grid { margin-top: 13px; padding-left: 5px; display: grid; grid-template-columns: repeat(4, 76px); grid-auto-rows: 53px; gap: 3px 2px; font-size: 18px; }
.c-grid div { background: #f0f0f0; display: flex; align-items: center; justify-content: center; }
.c-grid .r3 { padding-bottom: 2px; }
.c-grid i { font-family: "Liberation Serif", serif; font-style: italic; font-size: 21px; }
.c-grid sup { font-size: 13px; line-height: 0; vertical-align: 7px; margin-left: 2px; }
.c-grid sup i { font-size: 15px; }
.ten { font-size: 17px; letter-spacing: -.5px; }

/* paint */
.paint { position: absolute; left: 489px; top: 498px; width: 1047px; height: 366px; background: #fff; border: 1px solid #848a90; border-width: 1px 0 0 1px; box-shadow: 0 0 12px rgba(0,0,0,.4); overflow: hidden; }
.p-title { height: 37px; display: flex; align-items: center; padding-left: 8px; color: #999; }
.p-title s { width: 1px; height: 16px; background: #999; margin-left: 6px; }
.p-title .sv { margin-left: 14px; } .p-title .un { margin-left: 9px; } .p-title .re { margin-left: 9px; } .p-title .dd { margin-left: 9px; }
.p-title .s2nd { margin-left: 13px; }
.p-title span { margin: 0 0 3px 7px; font-size: 15px; letter-spacing: .15px; }
.p-tabs { height: 31px; display: flex; border-bottom: 1px solid #d8dce2; line-height: 26px; text-align: center; color: #444; }
.p-tabs b { font-weight: 400; }
.file { width: 70px; height: 28px; background: #1979ca; color: #fff; }
.home { width: 64px; height: 31px; background: #f4f6f8; border: 1px solid #d8dce2; border-bottom: 0; }
.view { width: 66px; padding-top: 1px; }
.ribbon { height: 120px; display: flex; background: #f4f6f8; border-bottom: 1px solid #dfe5ed; color: #444; white-space: nowrap; }
.grp { border-right: 1px solid #e2e4e7; height: 117px; display: flex; flex-direction: column; flex: none; }
.g1 { width: 125px; } .g2 { width: 152px; } .g3 { width: 96px; } .g4 { width: 62px; } .g5 { width: 275px; } .g6 { width: 62px; } .g7 { width: 430px; border: 0; }
.grp .body { height: 96px; display: flex; }
.grp h6 { text-align: center; font-size: 14.800px; line-height: 21px; color: #555; font-weight: 300; padding-right: 3px; }
.g7 h6 { padding-right: 0; }
.big { display: flex; flex-direction: column; align-items: center; padding-top: 7px; }
.big p, .brush p, .cbtn p { text-align: center; line-height: 19px; }
.big p { margin-top: 4px; }
small { display: inline-block; border: solid transparent; border-width: 4px 3.500px 0; border-top-color: #222; margin-left: 3px; vertical-align: 3px; }
.g1 .big { width: 50px; margin-left: 7px; }
.g2 .big { width: 50px; margin-left: 4px; }
.grp ul { padding-top: 3px; margin-left: 5px; }
.grp li { height: 26px; display: flex; align-items: center; line-height: 24px; padding-bottom: 1px; }
.grp li svg { margin-right: 5px; }
.grp li.off { color: #a2a2a2; }
.grp li.off small { border-top-color: #aaa; }
li small { margin-left: 5px; }
.g2 ul { margin-left: 4px; }
.g2 li svg { margin-right: 3px; }
.g2 li { font-size: 14.800px; }
.grp .tools { display: grid; grid-template-columns: 22px 22px 22px; grid-template-rows: 22px 22px; gap: 15px 6px; padding: 18px 0 0 8px; }
.tools svg { width: 22px; height: 22px; }
.tools strong { font: bold 26px/22px "Liberation Serif", serif; color: #20395e; text-align: center; margin-left: -3px; }
.brush { width: 50px; height: 84px; margin: 4px 0 0 4px; background: #cce2f8; border: 1px solid #6f9fd8; }
.brush > div { height: 45px; border-bottom: 1px solid #6f9fd8; padding: 2px 0 0 4px; }
.brush p { line-height: 19px; }
.gallery { width: 171px; height: 75px; margin: 7px 0 0 5px; border: 1px solid #d5d9de; background: #fbfdff; }
.gscroll { width: 17px; height: 75px; margin-top: 7px; border: 1px solid #d5d9de; border-left: 0; }
.g5 ul { margin-left: 6px; }
.g5 li svg { margin-right: 4px; }
.g6 .big { width: 56px; }
.cbtn { width: 50px; height: 87px; margin: 4px 0 0 4px; border: 1px solid transparent; display: flex; flex-direction: column; align-items: center; }
.cbtn + .cbtn { margin-left: 0; }
.cbtn.on { background: #cce2f8; border-color: #6f9fd8; }
.sw.k { width: 40px; height: 40px; margin-top: 2px; background: #000; border: 1px solid #888; box-shadow: inset 0 0 0 1.500px #d8d8d8; }
.sw.w { width: 30px; height: 30px; margin: 7px 0 5px; background: #fff; border: 1px solid #888; }
.cbtn p { margin-top: 2px; }
.pal { margin: 5px 0 0 1px; display: grid; grid-template-columns: repeat(7, 25px); grid-template-rows: 25px 25px 26px; gap: 2px; }
.pal i { border: 1px solid #a0a0a0; box-shadow: inset 0 0 0 1px #f7f8fa; }
.c1 { background: #000; } .c2 { background: #7f7f7f; } .c3 { background: #880015; } .c4 { background: #ed1c24; } .c5 { background: #ff7f27; } .c6 { background: #fff200; } .c7 { background: #22b14c; }
.c8 { background: #fff; } .c9 { background: #c3c3c3; } .c10 { background: #b97a57; } .c11 { background: #ffaec9; } .c12 { background: #ffc90e; } .c13 { background: #efe4b0; } .c14 { background: #b5e61d; }
.work { height: 178px; background: #c8d1e1; padding: 5px 0 0 5px; display: flex; }
.sheet { width: 575px; height: 173px; background: #fff; box-shadow: 6px 9px 5px -2px #b5c0d3; overflow: hidden; }
.logo-text { font: bold 100px "DejaVu Sans", sans-serif; fill: #0054a6; }
.handle { width: 5px; height: 5px; background: #fff; border: 1px solid #333; margin-top: 108px; }
```
